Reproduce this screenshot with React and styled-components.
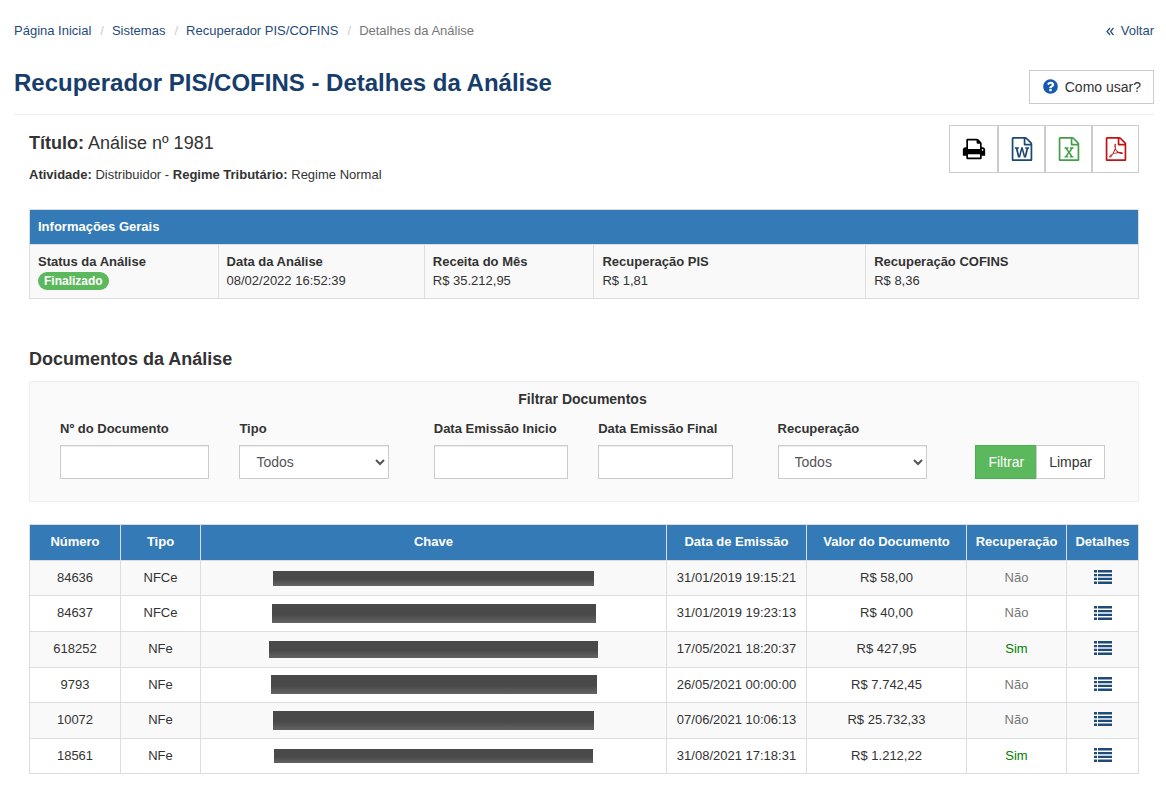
import React from 'react';
import styled, { createGlobalStyle } from 'styled-components';

const documents = [
    { number: '84636', type: 'NFCe', date: '31/01/2019 19:15:21', value: 'R$ 58,00', recovery: false, mask: [321, 15] },
    { number: '84637', type: 'NFCe', date: '31/01/2019 19:23:13', value: 'R$ 40,00', recovery: false, mask: [324, 19] },
    { number: '618252', type: 'NFe', date: '17/05/2021 18:20:37', value: 'R$ 427,95', recovery: true, mask: [329, 17] },
    { number: '9793', type: 'NFe', date: '26/05/2021 00:00:00', value: 'R$ 7.742,45', recovery: false, mask: [326, 19] },
    { number: '10072', type: 'NFe', date: '07/06/2021 10:06:13', value: 'R$ 25.732,33', recovery: false, mask: [321, 19] },
    { number: '18561', type: 'NFe', date: '31/08/2021 17:18:31', value: 'R$ 1.212,22', recovery: true, mask: [319, 14] },
];

const FILE_OUTLINE = 'M1596 380q28 28 48 76t20 88v1152q0 40-28 68t-68 28h-1344q-40 0-68-28t-28-68v-1600q0-40 28-68t68-28h896q40 0 88 20t76 48zm-444-244v376h376q-10-29-22-41l-313-313q-12-12-41-22zm384 1528v-1024h-416q-40 0-68-28t-28-68v-416h-768v1536h1280z';

const icons = {
    print: 'M448 1536h896v-256h-896v256zm0-640h896v-384h-160q-40 0-68-28t-28-68v-160h-640v640zm1152 64q0-26-19-45t-45-19-45 19-19 45 19 45 45 19 45-19 19-45zm128 0v416q0 13-9.5 22.5t-22.5 9.5h-224v160q0 40-28 68t-68 28h-960q-40 0-68-28t-28-68v-160h-224q-13 0-22.5-9.5t-9.5-22.5v-416q0-79 56.5-135.5t135.5-56.5h64v-544q0-40 28-68t68-28h672q40 0 88 20t76 48l152 152q28 28 48 76t20 88v256h64q79 0 135.5 56.5t56.5 135.5z',
    word: FILE_OUTLINE + 'm-1175-896v107h70l164 661h159l128-485q7-20 10-46 2-16 2-24h4l3 24q1 3 3.5 20t5.5 26l128 485h159l164-661h70v-107h-300v107h90l-99 438q-5 20-7 46l-2 21h-4q0-3-.5-6.5t-1.5-8-1-6.5q-1-5-4-21t-5-25l-144-545h-114l-144 545q-2 9-4.5 24.5t-3.5 21.5l-4 21h-4l-2-21q-2-26-7-46l-99-438h90v-107h-300z',
    excel: FILE_OUTLINE + 'm-979-234v106h281v-106h-75l103-161q5-7 10-16.5t7.5-13.5 3.5-4h2q1 4 5 10 2 4 4.5 7.5t6 8 6.5 8.5l107 161h-76v106h291v-106h-68l-192-273 195-282h67v-107h-279v107h74l-103 159q-4 7-10 16.5t-9 13.5l-2 3h-2q-1-4-5-10-6-11-17-23l-106-159h76v-107h-290v107h68l189 272-194 283h-68z',
    pdf: FILE_OUTLINE + 'm-514-593q33 26 84 56 59-7 117-7 147 0 177 49 16 22 2 52 0 1-1 2l-2 2v1q-6 38-71 38-48 0-115-20t-130-53q-221 24-392 83-153 262-242 262-15 0-28-7l-24-12q-1-1-6-5-10-10-6-36 9-40 56-91.5t132-96.5q14-9 23 6 2 2 2 4 52-85 107-197 68-136 104-262-24-82-30.5-159.5t6.5-127.5q11-40 42-40h22q23 0 35 15 18 21 9 68-2 6-4 8 1 3 1 8v30q-2 123-14 192 55 164 146 238zm-576 411q52-24 137-158-51 40-87.5 84t-49.5 74zm398-920q-15 42-2 132 1-7 7-44 0-3 7-43 1-4 4-8-1-1-1-2-1-2-1-3-1-22-13-36 0 1-1 2v2zm-124 661q135-54 284-81-2-1-13-9.5t-16-13.5q-76-67-127-176-27 86-83 197-30 56-45 83zm646-16q-24-24-140-24 76 28 124 28 14 0 18-1 0-1-2-3z',
    question: 'M1024 1376v-192q0-14-9-23t-23-9h-192q-14 0-23 9t-9 23v192q0 14 9 23t23 9h192q14 0 23-9t9-23zm256-672q0-88-55.5-163t-138.5-116-170-41q-243 0-371 213-15 24 8 42l132 100q7 6 19 6 16 0 25-12 53-68 86-92 34-24 86-24 48 0 85.5 26t37.5 59q0 38-20 61t-68 45q-63 28-115.5 86.5t-52.5 125.5v36q0 14 9 23t23 9h192q14 0 23-9t9-23q0-19 21.5-49.5t54.5-49.5q32-18 49-28.5t46-35 44.5-48 28-60.5 12.5-81zm384 192q0 209-103 385.5t-279.5 279.5-385.5 103-385.5-103-279.5-279.5-103-385.5 103-385.5 279.5-279.5 385.5-103 385.5 103 279.5 279.5 103 385.5z',
};

const Icon = ({ name, size }) => (
    <svg width={size} height={size} viewBox="0 0 1792 1792" fill="currentColor" aria-hidden="true">
        <path d={icons[name]} />
    </svg>
);

const BackIcon = () => (
    <svg width="8" height="9" viewBox="0 0 8 9" fill="none" stroke="currentColor" strokeWidth="1.2" aria-hidden="true">
        <path d="M4 1L1 4.5L4 8M7.5 1L4.5 4.5L7.5 8" />
    </svg>
);

const ListIcon = () => (
    <svg width="18" height="14" viewBox="0 0 18 14" fill="currentColor" aria-hidden="true">
        <path d="M0 0h3v2.4H0zM4 0h14v2.4H4zM0 3.9h3v2.4H0zM4 3.9h14v2.4H4zM0 7.7h3v2.4H0zM4 7.7h14v2.4H4zM0 11.6h3V14H0zM4 11.6h14V14H4z" />
    </svg>
);

const App = () => {
    return (
        <>
            <GlobalStyle />
            <Page>
                <TopBar>
                    <Breadcrumb aria-label="Navegação">
                        <Crumb><Link href="#inicio">Página Inicial</Link></Crumb>
                        <Crumb><Link href="#sistemas">Sistemas</Link></Crumb>
                        <Crumb><Link href="#recuperador">Recuperador PIS/COFINS</Link></Crumb>
                        <Crumb>Detalhes da Análise</Crumb>
                    </Breadcrumb>
                    <BackLink href="#voltar"><BackIcon />Voltar</BackLink>
                </TopBar>
                <Header>
                    <PageTitle>Recuperador PIS/COFINS - Detalhes da Análise</PageTitle>
                    <HelpButton type="button"><Icon name="question" size={17} />Como usar?</HelpButton>
                </Header>
                <Content>
                    <Summary>
                        <div>
                            <AnalysisTitle><b>Título:</b> Análise nº 1981</AnalysisTitle>
                            <AnalysisInfo><b>Atividade:</b> Distribuidor - <b>Regime Tributário:</b> Regime Normal</AnalysisInfo>
                        </div>
                        <ExportGroup>
                            <ExportButton type="button" aria-label="Imprimir" $color="#000"><Icon name="print" size={24} /></ExportButton>
                            <ExportButton type="button" aria-label="Word" $color="#1b4775"><Icon name="word" size={24} /></ExportButton>
                            <ExportButton type="button" aria-label="Excel" $color="#43a047"><Icon name="excel" size={24} /></ExportButton>
                            <ExportButton type="button" aria-label="PDF" $color="#c01414"><Icon name="pdf" size={24} /></ExportButton>
                        </ExportGroup>
                    </Summary>

                    <Table>
                        <colgroup>
                            <Col $width="17%" />
                            <Col $width="18.6%" />
                            <Col $width="15.3%" />
                            <Col $width="24.5%" />
                            <Col />
                        </colgroup>
                        <thead>
                            <tr><HeadCell colSpan={5} $left>Informações Gerais</HeadCell></tr>
                        </thead>
                        <tbody>
                            <Row>
                                <Cell $left><b>Status da Análise</b><Badge>Finalizado</Badge></Cell>
                                <Cell $left><b>Data da Análise</b><br />08/02/2022 16:52:39</Cell>
                                <Cell $left><b>Receita do Mês</b><br />R$ 35.212,95</Cell>
                                <Cell $left><b>Recuperação PIS</b><br />R$ 1,81</Cell>
                                <Cell $left><b>Recuperação COFINS</b><br />R$ 8,36</Cell>
                            </Row>
                        </tbody>
                    </Table>

                    <SectionTitle>Documentos da Análise</SectionTitle>
                    <FilterPanel onSubmit={(e) => e.preventDefault()}>
                        <FilterTitle>Filtrar Documentos</FilterTitle>
                        <FilterRow>
                            <FieldGroup $grow={329}>
                                <Field>
                                    <Label htmlFor="numero">Nº do Documento</Label>
                                    <Input id="numero" type="text" />
                                </Field>
                                <Field>
                                    <Label htmlFor="tipo">Tipo</Label>
                                    <Select id="tipo"><option>Todos</option></Select>
                                </Field>
                            </FieldGroup>
                            <FieldGroup $grow={299}>
                                <Field>
                                    <Label htmlFor="inicio">Data Emissão Inicio</Label>
                                    <Input id="inicio" type="text" />
                                </Field>
                                <Field>
                                    <Label htmlFor="final">Data Emissão Final</Label>
                                    <Input id="final" type="text" />
                                </Field>
                            </FieldGroup>
                            <FieldGroup $grow={150}>
                                <Field>
                                    <Label htmlFor="recuperacao">Recuperação</Label>
                                    <Select id="recuperacao"><option>Todos</option></Select>
                                </Field>
                            </FieldGroup>
                            <ButtonGroup>
                                <FilterButton type="submit" $primary>Filtrar</FilterButton>
                                <FilterButton type="reset">Limpar</FilterButton>
                            </ButtonGroup>
                        </FilterRow>
                    </FilterPanel>

                    <Table>
                        <colgroup>
                            <Col $width="91px" />
                            <Col $width="80px" />
                            <Col />
                            <Col $width="140px" />
                            <Col $width="160px" />
                            <Col $width="100px" />
                            <Col $width="72px" />
                        </colgroup>
                        <thead>
                            <tr>
                                <HeadCell>Número</HeadCell>
                                <HeadCell>Tipo</HeadCell>
                                <HeadCell>Chave</HeadCell>
                                <HeadCell>Data de Emissão</HeadCell>
                                <HeadCell>Valor do Documento</HeadCell>
                                <HeadCell>Recuperação</HeadCell>
                                <HeadCell>Detalhes</HeadCell>
                            </tr>
                        </thead>
                        <tbody>
                            {documents.map((doc) => (
                                <Row key={doc.number}>
                                    <Cell>{doc.number}</Cell>
                                    <Cell>{doc.type}</Cell>
                                    <Cell><KeyMask style={{ width: doc.mask[0], height: doc.mask[1] }} /></Cell>
                                    <Cell>{doc.date}</Cell>
                                    <Cell>{doc.value}</Cell>
                                    <Cell><Recovery $yes={doc.recovery}>{doc.recovery ? 'Sim' : 'Não'}</Recovery></Cell>
                                    <Cell><DetailLink href={`#${doc.number}`} aria-label="Detalhes"><ListIcon /></DetailLink></Cell>
                                </Row>
                            ))}
                        </tbody>
                    </Table>
                </Content>
            </Page>
        </>
    );
}

const GlobalStyle = createGlobalStyle`
    * {
        box-sizing: border-box;
    }
    body {
        margin: 0;
        background: #fff;
        color: #333;
        font: 13px/1.43 "Liberation Sans", Arial, sans-serif;
    }
    button, input, select {
        font-family: inherit;
        font-size: 14px;
    }
`;

const Page = styled.div`
    padding: 22px 12px 18px 14px;
`;

const TopBar = styled.div`
    display: flex;
    justify-content: space-between;
`;

const Breadcrumb = styled.nav`
    display: flex;
`;

const Crumb = styled.span`
    color: #777;

    & + &::before {
        content: "/";
        padding: 0 8px 0 9px;
        color: #ccc;
    }
`;

const Link = styled.a`
    color: #1f4b7a;
    text-decoration: none;
`;

const BackLink = styled(Link)`
    display: flex;
    align-items: center;
    gap: 7px;
`;

const Header = styled.header`
    display: flex;
    justify-content: space-between;
    align-items: flex-end;
    margin-top: 27px;
    padding-bottom: 10px;
    border-bottom: 1px solid #eee;
`;

const PageTitle = styled.h1`
    margin: 0 0 6px;
    font-size: 24px;
    line-height: 30px;
    color: #163d6b;
`;

const HelpButton = styled.button`
    display: flex;
    align-items: center;
    gap: 6px;
    height: 34px;
    padding: 0 12px;
    border: 1px solid #ccc;
    background: #fff;
    color: #333;

    svg {
        color: #1559b3;
    }
`;

const Content = styled.main`
    padding: 10px 15px 0;
`;

const Summary = styled.div`
    display: flex;
    justify-content: space-between;
    align-items: flex-start;
    margin-bottom: 24px;
`;

const AnalysisTitle = styled.h2`
    margin: 8px 0 12px;
    font-size: 18px;
    font-weight: normal;
    line-height: 20px;
`;

const AnalysisInfo = styled.p`
    margin: 0;
    line-height: 20px;
`;

const ExportGroup = styled.div`
    display: flex;
`;

const ExportButton = styled.button`
    display: flex;
    align-items: center;
    justify-content: center;
    width: 47px;
    height: 48px;
    padding: 0;
    border: 1px solid #ccc;
    background: #fff;
    color: ${({ $color }) => $color};

    &:first-child {
        width: 49px;
    }
`;

const Table = styled.table`
    width: 100%;
    table-layout: fixed;
    border-collapse: collapse;
`;

const Col = styled.col`
    width: ${({ $width }) => $width || 'auto'};
`;

const HeadCell = styled.th`
    padding: 8px 0 8px ${({ $left }) => ($left ? '8px' : '0')};
    border: 1px solid #ddd;
    background: #337ab7;
    color: #fff;
    text-align: ${({ $left }) => ($left ? 'left' : 'center')};
`;

const Row = styled.tr`
    &:nth-child(odd) {
        background: #f9f9f9;
    }
`;

const Cell = styled.td`
    padding: 8px;
    border: 1px solid #ddd;
    text-align: ${({ $left }) => ($left ? 'left' : 'center')};
    vertical-align: middle;
`;

const Badge = styled.span`
    display: block;
    width: fit-content;
    padding: 0 6px;
    border-radius: 9px;
    background: #5cb85c;
    color: #fff;
    font-size: 12px;
    font-weight: bold;
    line-height: 18px;
`;

const SectionTitle = styled.h2`
    margin: 50px 0 11px;
    font-size: 18px;
    line-height: 21px;
`;

const FilterPanel = styled.form`
    margin-bottom: 22px;
    padding: 7px 33px 22px 30px;
    border: 1px solid #eee;
    background: #fafafa;
`;

const FilterTitle = styled.h3`
    margin: 0 0 10px;
    font-size: 14px;
    line-height: 20px;
    text-align: center;
`;

const FilterRow = styled.div`
    display: flex;
    align-items: flex-end;
    gap: 45px;
`;

const FieldGroup = styled.div`
    display: flex;
    flex: ${({ $grow }) => $grow} 1 0;
    gap: 30px;
`;

const Field = styled.div`
    flex: 1 1 0;
    min-width: 0;
`;

const Label = styled.label`
    display: block;
    margin-bottom: 7px;
    font-weight: bold;
    line-height: 19px;
    white-space: nowrap;
`;

const Input = styled.input`
    display: block;
    width: 100%;
    height: 34px;
    padding: 6px 12px;
    border: 1px solid #ccc;
    background: #fff;
    color: #555;
    box-shadow: inset 0 1px 1px rgba(0, 0, 0, 0.075);
`;

const Select = styled(Input).attrs({ as: 'select' })`
    padding: 6px 0 6px 12px;
`;

const ButtonGroup = styled.div`
    display: flex;
    padding-left: 3px;
`;

const FilterButton = styled.button`
    height: 34px;
    padding: 0 12px;
    border: 1px solid ${({ $primary }) => ($primary ? '#4cae4c' : '#ccc')};
    background: ${({ $primary }) => ($primary ? '#5cb85c' : '#fff')};
    color: ${({ $primary }) => ($primary ? '#fff' : '#333')};

    & + & {
        margin-left: -1px;
    }
`;

const KeyMask = styled.div`
    margin: -2px auto;
    background: linear-gradient(#494949 55%, #636363);
`;

const Recovery = styled.span`
    color: ${({ $yes }) => ($yes ? '#008000' : '#777')};
`;

const DetailLink = styled(Link)`
    display: flex;
    justify-content: center;
    padding-bottom: 2px;
`;

export default App;
